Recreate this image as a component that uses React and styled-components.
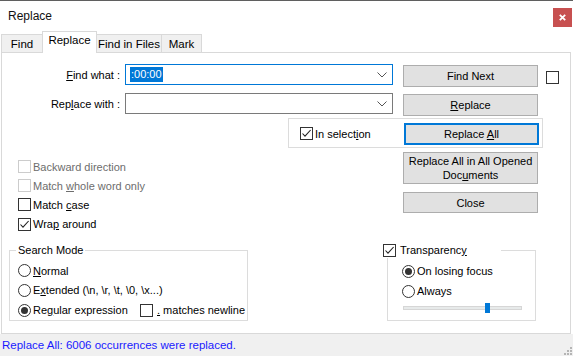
import styled, { createGlobalStyle } from "styled-components";

const font = `"Liberation Sans", Arial, sans-serif`;

const GlobalStyle = createGlobalStyle`
  body {
    margin: 0;
    background: #fff;
    font-family: ${font};
    font-size: 11px;
    color: #000;
  }
`;

const Window = styled.div`
  width: 573px;
  height: 356px;
  box-sizing: border-box;
  border-top: 1px solid #5f5f5f;
  background: #fff;
  display: flex;
  flex-direction: column;
  overflow: hidden;
`;

const TitleBar = styled.div`
  height: 30px;
  flex-shrink: 0;
  display: flex;
  align-items: center;
  padding: 0 1px 0 8px;
`;

const TitleText = styled.div`
  font-size: 12px;
  color: #111;
`;

const CloseButton = styled.div`
  margin-left: auto;
  align-self: flex-start;
  margin-top: 7px;
  width: 19px;
  height: 19px;
  background: #c75050;
  display: flex;
  align-items: center;
  justify-content: center;
`;

const TabStrip = styled.div`
  height: 21px;
  flex-shrink: 0;
  display: flex;
  align-items: flex-end;
  padding-left: 1px;
  position: relative;
  z-index: 1;
`;

const Tab = styled.div`
  width: ${(p) => p.$w}px;
  height: ${(p) => (p.$active ? 22 : 18)}px;
  margin-bottom: ${(p) => (p.$active ? -1 : 0)}px;
  margin-left: -1px;
  &:first-child {
    margin-left: 0;
  }
  box-sizing: border-box;
  border: 1px solid #d9d9d9;
  border-bottom: none;
  background: ${(p) => (p.$active ? "#fff" : "#f0f0f0")};
  position: relative;
  z-index: ${(p) => (p.$active ? 2 : 1)};
  text-align: center;
  font-size: 11.5px;
  line-height: ${(p) => (p.$active ? 17 : 19)}px;
  color: #000;
`;

const Panel = styled.div`
  margin-left: 1px;
  width: 570px;
  height: 282px;
  flex-shrink: 0;
  box-sizing: border-box;
  border: 1px solid #d9d9d9;
  background: #fff;
  display: flex;
  flex-direction: column;
`;

const TopRow = styled.div`
  display: flex;
  align-items: flex-start;
  margin-top: 11px;
`;

const FieldGrid = styled.div`
  display: grid;
  grid-template-columns: 123px 268px;
  grid-auto-rows: 21px;
  row-gap: 8px;
`;

const FieldLabel = styled.div`
  justify-self: end;
  align-self: center;
  padding-right: 5px;
`;

const Combo = styled.div`
  box-sizing: border-box;
  height: 21px;
  border: 1px solid ${(p) => (p.$focused ? "#0078d7" : "#7a7a7a")};
  background: #fff;
  display: flex;
  align-items: center;
  padding: 0 5px 0 4px;
`;

const ComboText = styled.div`
  flex: 1;
  display: flex;
  align-items: center;
`;

const Selected = styled.span`
  display: inline-block;
  background: #0078d7;
  color: #fff;
  line-height: 15px;
  padding: 0 1px;
`;

const ButtonStack = styled.div`
  display: flex;
  flex-direction: column;
  gap: ${(p) => p.$gap}px;
  margin-top: ${(p) => p.$top}px;
  margin-left: ${(p) => (p.$left == null ? "auto" : `${p.$left}px`)};
  margin-right: ${(p) => p.$right || 0}px;
`;

const Button = styled.div`
  box-sizing: border-box;
  width: 135px;
  height: ${(p) => p.$h || 22}px;
  background: #e1e1e1;
  border: ${(p) => (p.$default ? "2px solid #0078d7" : "1px solid #adadad")};
  display: flex;
  align-items: center;
  justify-content: center;
  text-align: center;
  line-height: 14px;
  flex-shrink: 0;
  color: #000;
`;

const SideCheck = styled.div`
  margin-left: 8px;
  margin-top: 7px;
`;

const SelectionBox = styled.div`
  box-sizing: border-box;
  margin: 2px 0 0 286px;
  width: 255px;
  height: 30px;
  border: 1px solid #dcdcdc;
  display: flex;
  align-items: center;
  padding: 1px 3px 0 11px;
`;

const MidRow = styled.div`
  display: flex;
  align-items: flex-start;
`;

const OptionList = styled.div`
  margin: 9px 0 0 16px;
  display: flex;
  flex-direction: column;
`;

const CheckItem = styled.div`
  height: ${(p) => p.$h || 19}px;
  display: flex;
  align-items: center;
  gap: 2px;
  color: ${(p) => (p.$disabled ? "#6d6d6d" : "#000")};
  width: ${(p) => (p.$w ? `${p.$w}px` : "auto")};
  flex-shrink: 0;
`;

const Box = styled.div`
  box-sizing: border-box;
  width: 13px;
  height: 13px;
  border: 1px solid ${(p) => (p.$disabled ? "#cccccc" : "#333")};
  background: #fff;
  flex-shrink: 0;
  display: flex;
`;

const Circle = styled.div`
  box-sizing: border-box;
  width: 13px;
  height: 13px;
  border-radius: 50%;
  border: 1px solid #333;
  background: #fff;
  flex-shrink: 0;
  display: flex;
  align-items: center;
  justify-content: center;
  &::after {
    content: "";
    display: ${(p) => (p.$on ? "block" : "none")};
    width: 7px;
    height: 7px;
    border-radius: 50%;
    background: #333;
  }
`;

const BottomRow = styled.div`
  display: flex;
  align-items: flex-start;
  margin-top: 16px;
`;

const GroupBox = styled.div`
  position: relative;
  box-sizing: border-box;
  margin-left: ${(p) => p.$ml}px;
  width: ${(p) => p.$w}px;
  height: 71px;
  border: 1px solid #dcdcdc;
  padding: 10px 0 0 ${(p) => p.$pl}px;
  display: flex;
  flex-direction: column;
`;

const GroupTitle = styled.div`
  position: absolute;
  top: -8px;
  left: ${(p) => p.$left}px;
  width: ${(p) => (p.$w ? `${p.$w}px` : "auto")};
  box-sizing: border-box;
  background: #fff;
  padding: 0 2px;
  line-height: 15px;
  display: flex;
  align-items: center;
  gap: 4px;
`;

const RadioRow = styled.div`
  height: 20px;
  display: flex;
  align-items: center;
`;

const Slider = styled.div`
  position: relative;
  width: 119px;
  height: 10px;
  margin: 2px 0 0 1px;
  display: flex;
  align-items: center;
`;

const Track = styled.div`
  width: 100%;
  height: 4px;
  box-sizing: border-box;
  background: #e7eaea;
  border: 1px solid #d6d6d6;
`;

const Thumb = styled.div`
  position: absolute;
  top: 0;
  width: 5px;
  height: 10px;
  background: #0078d7;
`;

const StatusBar = styled.div`
  flex: 1;
  background: #f0f0f0;
  display: flex;
  align-items: center;
  padding-left: 2px;
`;

const StatusText = styled.div`
  color: #1a1aff;
  font-size: 11.5px;
`;

const Grip = styled.svg`
  align-self: flex-end;
  margin: 0 1px 1px auto;
`;

const U = styled.span`
  text-decoration: underline;
`;

const Check = ({ checked, disabled }) => (
  <Box $disabled={disabled}>
    {checked && (
      <svg width="11" height="11" viewBox="0 0 11 11">
        <path d="M1.5 5.5 L4 8.2 L9.6 2" fill="none" stroke="#222" strokeWidth="1.1" />
      </svg>
    )}
  </Box>
);

const Chevron = () => (
  <svg width="10" height="6" viewBox="0 0 10 6">
    <path d="M0.5 0.5 L5 5 L9.5 0.5" fill="none" stroke="#555" strokeWidth="1" />
  </svg>
);

const Radio = ({ on, children }) => (
  <RadioRow>
    <Circle $on={on} />
    <span style={{ marginLeft: 2 }}>{children}</span>
  </RadioRow>
);

const tabs = [
  { label: "Find", w: 42 },
  { label: "Replace", w: 55, active: true },
  { label: "Find in Files", w: 66 },
  { label: "Mark", w: 41 },
];

const transparency = 0.69;

export default function App() {
  return (
    <>
      <GlobalStyle />
      <Window>
        <TitleBar>
          <TitleText>Replace</TitleText>
          <CloseButton>
            <svg width="7" height="7" viewBox="0 0 7 7">
              <path d="M0.8 0.8 L6.2 6.2 M6.2 0.8 L0.8 6.2" stroke="#fff" strokeWidth="1.8" />
            </svg>
          </CloseButton>
        </TitleBar>

        <TabStrip>
          {tabs.map((t) => (
            <Tab key={t.label} $w={t.w} $active={t.active}>
              {t.label}
            </Tab>
          ))}
        </TabStrip>

        <Panel>
          <TopRow>
            <FieldGrid>
              <FieldLabel>
                <U>F</U>ind what :
              </FieldLabel>
              <Combo $focused>
                <ComboText>
                  <Selected>:00:00</Selected>
                </ComboText>
                <Chevron />
              </Combo>
              <FieldLabel>
                Rep<U>l</U>ace with :
              </FieldLabel>
              <Combo>
                <ComboText />
                <Chevron />
              </Combo>
            </FieldGrid>
            <ButtonStack $left={10} $top={1} $gap={7}>
              <Button>Find Next</Button>
              <Button>
                <span>
                  <U>R</U>eplace
                </span>
              </Button>
            </ButtonStack>
            <SideCheck>
              <Check />
            </SideCheck>
          </TopRow>

          <SelectionBox>
            <CheckItem>
              <Check checked />
              <span>
                In select<U>i</U>on
              </span>
            </CheckItem>
            <ButtonStack $top={0} $gap={0}>
              <Button $default>
                <span>
                  Replace <U>A</U>ll
                </span>
              </Button>
            </ButtonStack>
          </SelectionBox>

          <MidRow>
            <OptionList>
              <CheckItem $disabled>
                <Check disabled />
                <span>Backward direction</span>
              </CheckItem>
              <CheckItem $disabled>
                <Check disabled />
                <span>
                  Match <U>w</U>hole word only
                </span>
              </CheckItem>
              <CheckItem>
                <Check />
                <span>
                  Match <U>c</U>ase
                </span>
              </CheckItem>
              <CheckItem $h={20}>
                <Check checked />
                <span>
                  Wra<U>p</U> around
                </span>
              </CheckItem>
            </OptionList>
            <ButtonStack $top={4} $gap={8} $right={32}>
              <Button $h={32}>
                <span>
                  Replace All in All Opened
                  <br />
                  Doc<U>u</U>ments
                </span>
              </Button>
              <Button $h={21}>Close</Button>
            </ButtonStack>
          </MidRow>

          <BottomRow>
            <GroupBox $ml={7} $w={239} $pl={8}>
              <GroupTitle $left={6}>Search Mode</GroupTitle>
              <Radio>
                <U>N</U>ormal
              </Radio>
              <Radio>
                E<U>x</U>tended (\n, \r, \t, \0, \x...)
              </Radio>
              <RadioRow>
                <CheckItem $w={122} $h={20}>
                  <Circle $on />
                  <span>
                    Re<U>g</U>ular expression
                  </span>
                </CheckItem>
                <CheckItem $h={20}>
                  <Check />
                  <span style={{ marginLeft: 2 }}>
                    <U>.</U> matches newline
                  </span>
                </CheckItem>
              </RadioRow>
            </GroupBox>

            <GroupBox $ml={139} $w={149} $pl={14}>
              <GroupTitle $left={-7} $w={120}>
                <Check checked />
                <span>
                  Transparenc<U>y</U>
                </span>
              </GroupTitle>
              <Radio on>On losing focus</Radio>
              <Radio>Always</Radio>
              <Slider>
                <Track />
                <Thumb style={{ left: Math.round(transparency * 119) }} />
              </Slider>
            </GroupBox>
          </BottomRow>
        </Panel>

        <StatusBar>
          <StatusText>Replace All: 6006 occurrences were replaced.</StatusText>
          <Grip width="9" height="9" viewBox="0 0 9 9">
            {[
              [7, 1],
              [4, 4],
              [7, 4],
              [1, 7],
              [4, 7],
              [7, 7],
            ].map(([x, y]) => (
              <rect key={`${x}-${y}`} x={x} y={y} width="2" height="2" fill="#b5b5b5" />
            ))}
          </Grip>
        </StatusBar>
      </Window>
    </>
  );
}
